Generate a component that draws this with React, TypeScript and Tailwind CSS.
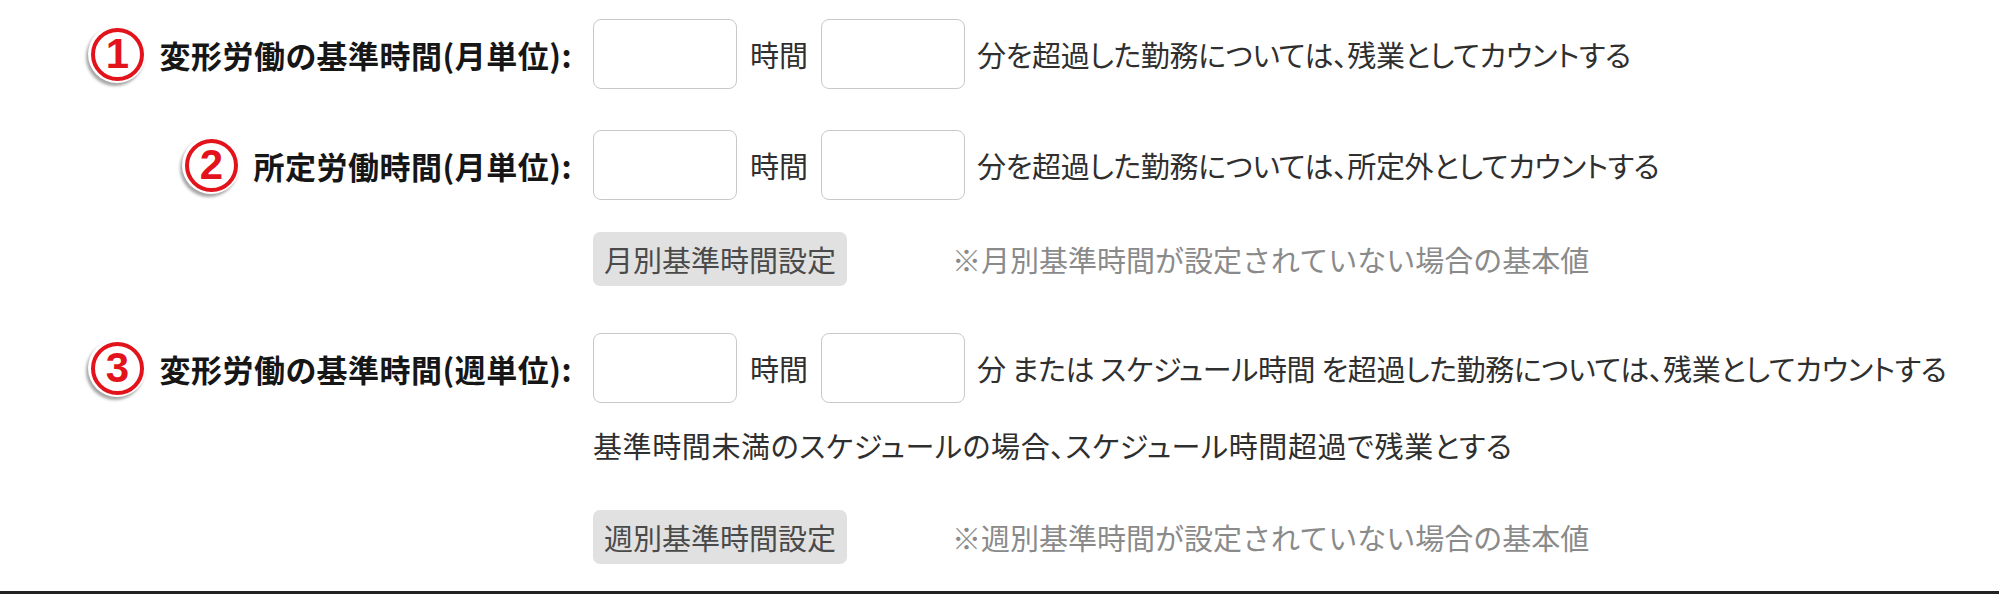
import React from "react";

const jp = "[font-family:'Noto_Sans_CJK_JP','Noto_Sans_CJK_SC',sans-serif]";

function Badge({ n }: { n: string }) {
  return (
    <span className="flex h-[58px] w-[58px] shrink-0 items-center justify-center rounded-full bg-white shadow-[-2px_3px_3px_rgba(0,0,0,0.35)]">
      <span className="flex h-[53px] w-[53px] items-center justify-center rounded-full border-[4px] border-[#e3131b] bg-white">
        <span className="[font-family:'Liberation_Sans',Arial,sans-serif] text-[42px] font-bold leading-none text-[#e3131b]">
          {n}
        </span>
      </span>
    </span>
  );
}

function Label({ n, text }: { n: string; text: string }) {
  return (
    <div className="flex w-[572px] shrink-0 items-center justify-end gap-[13px]">
      <Badge n={n} />
      <span className="text-[31px] font-bold leading-none tracking-[0.5px] text-[#161616]">{text}</span>
    </div>
  );
}

function TimeBox() {
  return <input className="h-[70px] w-[144px] shrink-0 rounded-[8px] border border-[#c9c9c9] bg-white outline-none" />;
}

function TimeInputs({ tail }: { tail: React.ReactNode }) {
  return (
    <div className="flex items-center">
      <TimeBox />
      <span className="mx-[13px]">時間</span>
      <TimeBox />
      <span className="ml-[12px] tracking-[-0.35px]">{tail}</span>
    </div>
  );
}

function SetButton({ text, note }: { text: string; note: string }) {
  return (
    <div className="flex items-center">
      <button className="h-[54px] w-[254px] rounded-[7px] bg-[#e1e1e1] text-[#4a4a4a]">{text}</button>
      <span className="ml-[105px] text-[#8a8a8a] [font-feature-settings:normal]">{note}</span>
    </div>
  );
}

export default function App() {
  return (
    <div
      className={`${jp} flex h-[594px] w-full flex-col border-b-[3px] border-[#222] bg-white pt-[19px] text-[29px] leading-none text-[#2f2f2f] [font-feature-settings:'palt']`}
    >
      <div className="flex items-center gap-[21px]">
        <Label n="1" text="変形労働の基準時間(月単位):" />
        <TimeInputs tail="分を超過した勤務については、残業としてカウントする" />
      </div>

      <div className="mt-[41px] flex items-center gap-[21px]">
        <Label n="2" text="所定労働時間(月単位):" />
        <TimeInputs tail="分を超過した勤務については、所定外としてカウントする" />
      </div>

      <div className="mt-[32px] pl-[593px]">
        <SetButton text="月別基準時間設定" note="※月別基準時間が設定されていない場合の基本値" />
      </div>

      <div className="mt-[47px] flex items-center gap-[21px]">
        <Label n="3" text="変形労働の基準時間(週単位):" />
        <TimeInputs tail="分 または スケジュール時間 を超過した勤務については、残業としてカウントする" />
      </div>

      <div className="mt-[22px] flex h-[40px] items-center pl-[593px] tracking-[0.6px]">
        基準時間未満のスケジュールの場合、スケジュール時間超過で残業とする
      </div>

      <div className="mt-[45px] pl-[593px]">
        <SetButton text="週別基準時間設定" note="※週別基準時間が設定されていない場合の基本値" />
      </div>
    </div>
  );
}
